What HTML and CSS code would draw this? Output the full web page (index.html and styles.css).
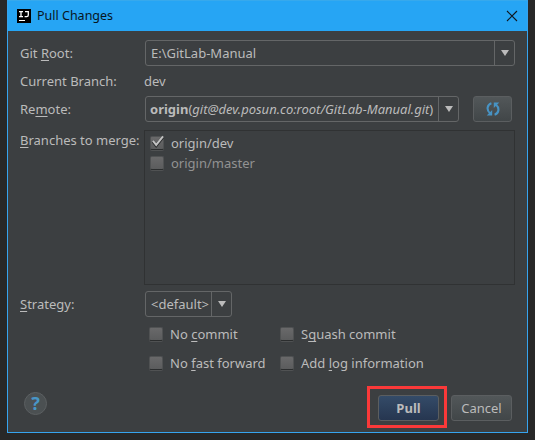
FILE: index.html
```html
<!DOCTYPE html>
<html lang="en">
<head>
<meta charset="utf-8">
<title>Pull Changes</title>
<link rel="stylesheet" href="styles.css">
</head>
<body>
<main class="dialog">
  <header class="titlebar">
    <svg class="logo" width="14" height="14" viewBox="0 0 14 14"><path fill="#000" d="M0 0h14v14H0z"/><path d="M2 2.6h4M4 2.6v5M2 7.6h4M8 2.6h3.3v3.4q0 1.6-1.6 1.6H7.6" fill="none" stroke="#fff" stroke-width="1.3"/><path fill="#fff" d="M2 11h6v1H2z"/></svg>
    <h1>Pull Changes</h1>
    <svg class="close" width="10" height="10" viewBox="0 0 10 10"><path d="M0 0l10 10M10 0L0 10" stroke="#101820" stroke-width="1.1"/></svg>
  </header>
  <form class="form">
    <div class="row root"><label>Git <u>R</u>oot:</label><div class="combo wide"><span>E:\GitLab-Manual</span><i class="arrow"></i></div></div>
    <div class="row current"><label>Current Branch:</label><span class="value">dev</span></div>
    <div class="row remote"><label>Re<u>m</u>ote:</label><div class="combo url"><span><b>origin</b>(<em>git@dev.posun.co:root/GitLab-Manual.git</em>)</span><i class="arrow"></i></div>
      <button type="button" class="btn refresh" aria-label="Refresh"><svg width="14" height="14" viewBox="0 0 14 14"><g fill="none" stroke="#4793c4" stroke-width="2.1"><path d="M5.4 1.2C1.2 2.6.1 8 4 11.2"/><path d="M8.6 12.8c4.2-1.4 5.3-6.8 1.4-10"/></g><path fill="#4793c4" d="M6.2 8v5.5H.7zM7.8 6V.5h5.5z"/></svg></button>
    </div>
    <div class="row branches"><label><u>B</u>ranches to merge:</label>
      <div class="list">
        <div class="check"><i class="box"><svg width="16" height="15" viewBox="0 0 16 15"><path d="M3 6.5l3.2 4L13 2" fill="none" stroke="#292b2c" stroke-width="3"/><path d="M3 5.8l3.2 4L13 1.3" fill="none" stroke="#c2c2c2" stroke-width="2"/></svg></i><span class="t-dev">origin/dev</span></div>
        <div class="check muted"><i class="box"></i><span class="t-master">origin/master</span></div>
      </div>
    </div>
    <div class="row strategy"><label><u>S</u>trategy:</label><div class="combo small"><span>&lt;default&gt;</span><i class="arrow"></i></div></div>
    <div class="options">
      <div class="check"><i class="box"></i><span class="t-nc">No <u>c</u>ommit</span></div>
      <div class="check"><i class="box"></i><span class="t-sq">S<u>q</u>uash commit</span></div>
      <div class="check"><i class="box"></i><span class="t-ff">No <u>f</u>ast forward</span></div>
      <div class="check"><i class="box"></i><span class="t-log">Add <u>l</u>og information</span></div>
    </div>
  </form>
  <footer class="footer">
    <div class="help">?</div>
    <div class="highlight"><button type="button" class="btn primary">Pull</button></div>
    <button type="button" class="btn cancel">Cancel</button>
  </footer>
</main>
</body>
</html>
```
FILE: styles.css
```css
* { box-sizing: border-box; }
body {
  margin: 0;
  height: 440px;
  overflow: hidden;
  background: #282828;
  color: #bbb;
  font: 13px/18px "Noto Sans", "Open Sans", sans-serif;
  white-space: nowrap;
}
.dialog {
  width: 521px;
  height: 433px;
  margin-left: 7px;
  border: 1px solid #36a4ef;
  border-top: 0;
  background: #3c3f41;
}
.titlebar {
  display: flex;
  align-items: center;
  height: 31px;
  padding: 0 10px 0 9px;
  background: #26a5f4;
  border-top: 1px solid #37a9ec;
  color: #08151e;
}
.titlebar h1 { margin: 0 auto 0 6px; font-size: 12.5px; font-weight: 400; }
.close { overflow: visible; }
.form { height: 349px; padding: 9px 12px 0; }
.row { display: grid; grid-template-columns: 125px auto; align-items: center; justify-content: start; }
.root { height: 26px; }
.current { height: 30px; }
.remote { height: 26px; grid-template-columns: 125px 314px 39px; }
.value { margin-left: -1px; }
u { text-decoration-thickness: 1px; text-underline-offset: 2px; text-decoration-skip-ink: none; }
.combo {
  display: flex;
  align-items: stretch;
  height: 26px;
  border: 1px solid #646667;
  border-radius: 3px;
}
.combo span { flex: 1; min-width: 0; padding: 3px 0 0 5px; overflow: hidden; }
.wide { width: 370px; }
.url { width: 314px; }
.small { width: 87px; }
.arrow { display: grid; place-items: center; width: 20px; border-left: 1px solid #646667; }
.arrow::before {
  content: "";
  border: 4px solid transparent;
  border-top: 6px solid #bbb;
  border-bottom: 0;
}
.url span { padding-left: 4px; }
.btn {
  height: 26px;
  padding: 0;
  border: 1px solid #5b5e60;
  border-radius: 3px;
  background: linear-gradient(#525759, #414648);
  color: #bbb;
  font: inherit;
}
.refresh { display: grid; place-items: center; width: 39px; margin-left: 14px; }
.branches { align-items: start; margin-top: 8px; }
.branches label { margin-top: 1px; }
.list { width: 371px; height: 155px; margin-left: -1px; padding: 2px 5px; border: 1px solid #303233; }
.check { display: flex; align-items: center; gap: 7px; height: 20px; }
.box {
  width: 14px;
  height: 14px;
  border: 1px solid #505253;
  border-bottom-color: #2b2d2e;
  border-radius: 2px;
  background: linear-gradient(#69696a, #5b5c5d);
  box-shadow: 0 1px #505253;
}
.box svg { display: block; margin: -2px 0 0 -1px; overflow: visible; }
.muted { color: #929292; }
.strategy { margin-top: 6px; }
.options {
  display: grid;
  grid-template-columns: 131px auto;
  justify-content: start;
  row-gap: 9px;
  margin: 7px 0 0 129px;
}
.footer { display: flex; height: 52px; padding: 6px 15px 0 16px; }
.help {
  width: 23px;
  height: 23px;
  margin: 6px auto 0 0;
  border: 1px solid #5b5f61;
  border-radius: 50%;
  background: #4b5052;
  color: #4896c7;
  font-weight: 700;
  font-size: 18px;
  line-height: 21px;
  text-align: center;
}
.highlight { width: 80px; height: 42px; margin-right: 4px; padding: 6px 8px; border: 3px solid #fa3939; }
.primary { width: 61px; background: linear-gradient(#344b68, #263650); font-weight: 700; }
.cancel { width: 61px; margin-top: 9px; }
```
